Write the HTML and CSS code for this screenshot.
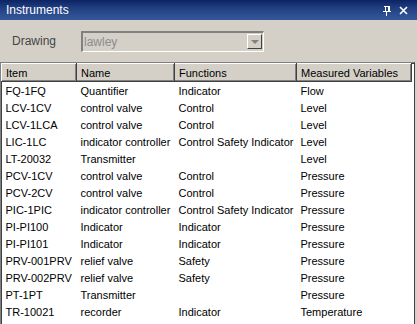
FILE: index.html
```html
<!DOCTYPE html>
<html lang="en">
<head>
    <meta charset="utf-8" />
    <title>Instruments</title>
    <link rel="stylesheet" href="styles.css">
</head>
<body>
    <div class="panel">
        <div class="titlebar">
            <span class="title">Instruments</span>
            <span class="tools">
                <svg width="8" height="11" viewBox="0 0 8 11">
                    <path d="M1 1h6M2 1v5M5 1v5M6 1v5M0 6h8M3.5 6v5" stroke="#fff" stroke-width="1" fill="none" shape-rendering="crispEdges"/>
                </svg>
                <svg width="9" height="9" viewBox="0 0 9 9">
                    <path d="M1 1l7 7M8 1l-7 7" stroke="#fff" stroke-width="1.6" fill="none"/>
                </svg>
            </span>
        </div>

        <div class="filter">
            <label class="filter-label">Drawing</label>
            <div class="combo">
                <span class="combo-value">lawley</span>
                <span class="combo-btn"><span class="arrow"></span></span>
            </div>
        </div>

        <div class="list">
            <table class="grid">
                <colgroup>
                    <col style="width:75px">
                    <col style="width:98px">
                    <col style="width:122px">
                    <col style="width:115px">
                    <col>
                </colgroup>
                <thead>
                    <tr>
                        <th>Item</th>
                        <th>Name</th>
                        <th>Functions</th>
                        <th>Measured Variables</th>
                        <th class="filler"></th>
                    </tr>
                </thead>
                <tbody>
                    <tr><td>FQ-1FQ</td><td>Quantifier</td><td>Indicator</td><td>Flow</td><td></td></tr>
                    <tr><td>LCV-1CV</td><td>control valve</td><td>Control</td><td>Level</td><td></td></tr>
                    <tr><td>LCV-1LCA</td><td>control valve</td><td>Control</td><td>Level</td><td></td></tr>
                    <tr><td>LIC-1LC</td><td>indicator controller</td><td>Control Safety Indicator</td><td>Level</td><td></td></tr>
                    <tr><td>LT-20032</td><td>Transmitter</td><td></td><td>Level</td><td></td></tr>
                    <tr><td>PCV-1CV</td><td>control valve</td><td>Control</td><td>Pressure</td><td></td></tr>
                    <tr><td>PCV-2CV</td><td>control valve</td><td>Control</td><td>Pressure</td><td></td></tr>
                    <tr><td>PIC-1PIC</td><td>indicator controller</td><td>Control Safety Indicator</td><td>Pressure</td><td></td></tr>
                    <tr><td>PI-PI100</td><td>Indicator</td><td>Indicator</td><td>Pressure</td><td></td></tr>
                    <tr><td>PI-PI101</td><td>Indicator</td><td>Indicator</td><td>Pressure</td><td></td></tr>
                    <tr><td>PRV-001PRV</td><td>relief valve</td><td>Safety</td><td>Pressure</td><td></td></tr>
                    <tr><td>PRV-002PRV</td><td>relief valve</td><td>Safety</td><td>Pressure</td><td></td></tr>
                    <tr><td>PT-1PT</td><td>Transmitter</td><td></td><td>Pressure</td><td></td></tr>
                    <tr><td>TR-10021</td><td>recorder</td><td>Indicator</td><td>Temperature</td><td></td></tr>
                </tbody>
            </table>
        </div>
    </div>
</body>
</html>
```

FILE: styles.css
```css
html, body {
    margin: 0;
    padding: 0;
    height: 100%;
    overflow: hidden;
}

body {
    font-family: Tahoma, 'Liberation Sans', Arial, sans-serif;
    font-size: 11px;
    color: #000;
    background-color: #d4d0c8;
}

.panel {
    display: flex;
    flex-direction: column;
    height: 100%;
}

.titlebar {
    height: 20px;
    display: flex;
    align-items: center;
    justify-content: space-between;
    padding: 0 9px 0 6px;
    background: linear-gradient(to bottom, #0c2364 0%, #1e3c7e 35%, #2d4f92 75%, #34579b 100%);
    color: #fff;
}

.title {
    font-size: 12px;
}

.tools {
    display: flex;
    align-items: center;
    gap: 8px;
}

.filter {
    display: flex;
    align-items: center;
    height: 42px;
    padding-left: 12px;
}

.filter-label {
    width: 69px;
    color: #444;
    font-size: 12px;
}

.combo {
    width: 180px;
    height: 18px;
    display: flex;
    align-items: center;
    justify-content: space-between;
    border-top: 2px solid #808080;
    border-left: 2px solid #808080;
    border-bottom: 1px solid #fff;
    border-right: 1px solid #fff;
    box-shadow: inset -1px -1px 0 #d4d0c8;
}

.combo-value {
    color: #8c8c8c;
    font-size: 12px;
    padding-left: 1px;
}

.combo-btn {
    width: 15px;
    height: 15px;
    margin-right: 1px;
    display: flex;
    align-items: center;
    justify-content: center;
    border-top: 1px solid #fff;
    border-left: 1px solid #fff;
    border-right: 1px solid #404040;
    border-bottom: 1px solid #404040;
    box-sizing: border-box;
}

.arrow {
    width: 0;
    height: 0;
    border-left: 4px solid transparent;
    border-right: 4px solid transparent;
    border-top: 4px solid #808080;
}

.list {
    flex: 1;
    margin-right: 2px;
    background-color: #fff;
    border-top: 1px solid #808080;
    border-left: 1px solid #808080;
    border-right: 1px solid #404040;
    box-shadow: inset 1px 1px 0 #404040;
    overflow: hidden;
}

table.grid {
    border-collapse: collapse;
    table-layout: fixed;
    width: 100%;
}

table.grid th {
    height: 17px;
    padding: 0 4px;
    text-align: left;
    font-weight: normal;
    background-color: #d4d0c8;
    border-top: 1px solid #fff;
    border-left: 1px solid #fff;
    border-right: 1px solid #404040;
    border-bottom: 1px solid #404040;
    box-shadow: inset -1px -1px 0 #808080;
    white-space: nowrap;
    overflow: hidden;
}

table.grid th.filler {
    background-color: #fff;
    border: none;
    box-shadow: none;
}

table.grid td {
    height: 17px;
    padding: 0 4px;
    white-space: nowrap;
    overflow: hidden;
}
```
